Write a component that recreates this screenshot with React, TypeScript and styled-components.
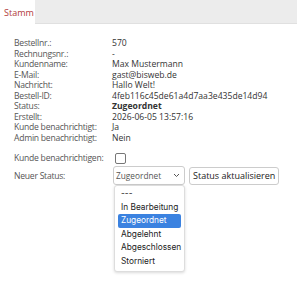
import React from "react";
import styled, { createGlobalStyle } from "styled-components";

const Global = createGlobalStyle`
	body {
		margin: 0;
		background: #fff;
		font-family: "Open Sans", "Liberation Sans", sans-serif;
	}
`;

const Page = styled.div`
	width: 300px;
	height: 283px;
	overflow: hidden;
	position: relative;
`;

const TabBar = styled.div`
	display: flex;
	width: 297px;
	height: 24px;
	background: #ececec;
	border-bottom: 1px solid #e0e0e0;
	box-sizing: border-box;
`;

const Tab = styled.div`
	width: 35px;
	height: 25px;
	background: #fff;
	color: #b23b3b;
	font-size: 9px;
	line-height: 25px;
	padding-left: 4px;
	box-sizing: border-box;
`;

const Content = styled.div`
	padding: 14px 0 0 14px;
`;

const Info = styled.div`
	display: grid;
	grid-template-columns: 98px 1fr;
	font-size: 8.6px;
	line-height: 10.5px;
	color: #444;
`;

const Label = styled.div`
	color: #555;
	white-space: nowrap;
	letter-spacing: -0.25px;
`;

const Value = styled.div<{ $bold?: boolean }>`
	color: #333;
	font-weight: ${(p) => (p.$bold ? 700 : 400)};
`;

const Form = styled.div`
	margin-top: 9px;
	display: grid;
	grid-template-columns: 99px 1fr;
	row-gap: 2px;
	font-size: 8.6px;
	color: #555;
	align-items: center;
	white-space: nowrap;
	letter-spacing: -0.25px;
`;

const Check = styled.span`
	display: block;
	width: 9px;
	height: 9px;
	border: 1px solid #777;
	border-radius: 2px;
	margin-left: 2px;
`;

const Controls = styled.div`
	display: flex;
	align-items: center;
	gap: 4px;
	position: relative;
	letter-spacing: 0;
`;

const Select = styled.div`
	width: 72px;
	height: 19px;
	box-sizing: border-box;
	border: 1px solid #ccc;
	border-radius: 3px;
	display: flex;
	align-items: center;
	justify-content: space-between;
	padding: 0 4px 0 2px;
	font-size: 8.3px;
	color: #555;
`;

const Button = styled.div`
	height: 18px;
	box-sizing: border-box;
	border: 1px solid #ccc;
	border-radius: 3px;
	padding: 0 3px;
	display: flex;
	align-items: center;
	font-size: 9px;
	color: #222;
`;

const Popup = styled.ul`
	position: absolute;
	left: 1px;
	top: 19px;
	width: 71px;
	margin: 0;
	padding: 1px 3px 3px;
	list-style: none;
	background: #fff;
	border: 1px solid #ddd;
	border-radius: 3px;
	box-shadow: 0 1px 3px rgba(0, 0, 0, 0.15);
	box-sizing: border-box;
	font-family: Inter, "Liberation Sans", sans-serif;
	font-size: 8.3px;
	color: #222;
`;

const Option = styled.li<{ $active?: boolean }>`
	height: 13.5px;
	line-height: 13.5px;
	padding-left: 3px;
	border-radius: 2px;
	background: ${(p) => (p.$active ? "#3b82e0" : "transparent")};
	color: ${(p) => (p.$active ? "#fff" : "#222")};
`;

const rows: [string, string, boolean?][] = [
	["Bestellnr.:", "570"],
	["Rechnungsnr.:", "-"],
	["Kundenname:", "Max Mustermann"],
	["E-Mail:", "gast@bisweb.de"],
	["Nachricht:", "Hallo Welt!"],
	["Bestell-ID:", "4feb116c45de61a4d7aa3e435de14d94"],
	["Status:", "Zugeordnet", true],
	["Erstellt:", "2026-06-05 13:57:16"],
	["Kunde benachrichtigt:", "Ja"],
	["Admin benachrichtigt:", "Nein"],
];

const options = ["---", "In Bearbeitung", "Zugeordnet", "Abgelehnt", "Abgeschlossen", "Storniert"];

const App = () => (
	<Page>
		<Global />
		<TabBar>
			<Tab>Stamm</Tab>
		</TabBar>
		<Content>
			<Info>
				{rows.map(([l, v, b]) => (
					<React.Fragment key={l}>
						<Label>{l}</Label>
						<Value $bold={b}>{v}</Value>
					</React.Fragment>
				))}
			</Info>
			<Form>
				<span>Kunde benachrichtigen:</span>
				<Check />
				<span>Neuer Status:</span>
				<Controls>
					<Select>
						<span>Zugeordnet</span>
						<svg width="7" height="5" viewBox="0 0 7 5">
							<path d="M1 1l2.5 2.5L6 1" fill="none" stroke="#555" strokeWidth="1" />
						</svg>
					</Select>
					<Button>Status aktualisieren</Button>
					<Popup>
						{options.map((o) => (
							<Option key={o} $active={o === "Zugeordnet"}>
								{o}
							</Option>
						))}
					</Popup>
				</Controls>
			</Form>
		</Content>
	</Page>
);

export default App;
